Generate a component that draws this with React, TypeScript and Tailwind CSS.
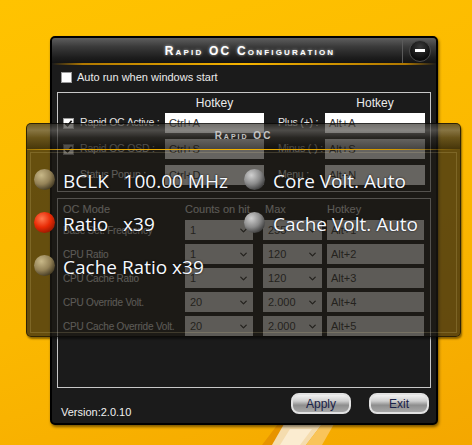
import { ChevronDown } from 'lucide-react';

const ui = { fontFamily: '"Liberation Sans", Arial, sans-serif' };
const big = { fontFamily: '"Open Sans", "Noto Sans", sans-serif' };

const hotRows = [
  { check: true, label: 'Rapid OC Active :', a: 'Ctrl+A', label2: 'Plus (+) :', b: 'Alt+A' },
  { check: true, label: 'Rapid OC OSD :', a: 'Ctrl+S', label2: 'Minus (-) :', b: 'Alt+S' },
  { check: false, label: 'Status Popup :', a: 'Ctrl+D', label2: 'Menu :', b: 'Alt+N' },
];

const modeRows = [
  { label: 'Base Set. Frequency', count: '1', max: '255', key: 'Alt+1' },
  { label: 'CPU Ratio', count: '1', max: '120', key: 'Alt+2' },
  { label: 'CPU Cache Ratio', count: '1', max: '120', key: 'Alt+3' },
  { label: 'CPU Override Volt.', count: '20', max: '2.000', key: 'Alt+4' },
  { label: 'CPU Cache Override Volt.', count: '20', max: '2.000', key: 'Alt+5' },
];

function Check({ checked }: { checked?: boolean }) {
  return (
    <span className="flex h-[11px] w-[11px] items-center justify-center border border-[#9a9a9a] bg-white">
      {checked && (
        <svg viewBox="0 0 10 10" className="h-[9px] w-[9px]">
          <path d="M1.5 5 L4 7.5 L8.5 2" fill="none" stroke="#111" strokeWidth="2" />
        </svg>
      )}
    </span>
  );
}

function Drop({ value, w }: { value: string; w: string }) {
  return (
    <div className={`flex h-[20px] ${w} items-center justify-between bg-[#e4e4e4] pl-[5px] pr-[4px] text-[11px] text-[#333]`}>
      <span>{value}</span>
      <ChevronDown size={11} strokeWidth={3} className="text-[#333]" />
    </div>
  );
}

function Ball({ tone }: { tone: 'tan' | 'red' | 'gray' }) {
  const cls =
    tone === 'red'
      ? 'bg-[radial-gradient(circle_at_38%_32%,#ff7a50,#e82a05_45%,#7a1200_90%)]'
      : tone === 'gray'
        ? 'bg-[radial-gradient(circle_at_35%_30%,#d0d0d0,#8a8a8a_45%,#1a1a1a_92%)]'
        : 'bg-[radial-gradient(circle_at_35%_30%,#c8b888,#948257_45%,#201a0c_92%)]';
  return <span className={`h-[21px] w-[21px] shrink-0 rounded-full ${cls}`} />;
}

function Reading({ tone, text }: { tone: 'tan' | 'red' | 'gray'; text: string }) {
  return (
    <div className="flex h-[22px] items-center">
      <Ball tone={tone} />
      <span
        className="ml-[8px] mt-[5px] whitespace-pre text-[19px] leading-none text-[#f6f9ff] [text-shadow:0_0_2px_rgba(0,0,0,0.9)]"
        style={big}
      >
        {text}
      </span>
    </div>
  );
}

export default function App() {
  return (
    <div className="relative h-[445px] w-[472px] overflow-hidden bg-[linear-gradient(160deg,#ffc300_0%,#fbb800_55%,#f4a700_100%)]" style={ui}>
      {/* wallpaper flower petal */}
      <svg className="absolute bottom-0 left-[250px] h-[22px] w-[100px]" viewBox="0 0 100 22">
        <polygon points="12,22 28,1 36,1 22,22" fill="#e79400" />
        <polygon points="22,22 34,1 72,1 56,22" fill="#f5dcae" />
        <polygon points="30,22 40,6 62,6 50,22" fill="#fbecd0" />
        <polygon points="56,22 72,1 84,1 72,22" fill="#f9c45a" />
      </svg>

      {/* main window */}
      <div className="absolute left-[50px] top-[36px] flex h-[389px] w-[388px] flex-col overflow-hidden rounded-[5px] border-2 border-black bg-[#1b1b1b] shadow-[1px_2px_3px_rgba(0,0,0,0.5)]">
        <div className="flex h-[25px] bg-[linear-gradient(180deg,#5e5e5e_0%,#3a3a3a_35%,#1c1c1c_80%,#141414_100%)]">
          <div className="flex flex-1 items-center justify-center pl-[46px]">
            <span className="text-[12px] font-bold tracking-[2.2px] text-white [font-variant:small-caps] [text-shadow:0_0_3px_rgba(255,255,255,0.7)]">
              Rapid OC Configuration
            </span>
          </div>
          <div className="w-px bg-[#5a5a5a]" />
          <div className="flex w-[33px] items-center justify-center">
            <span className="flex h-[22px] w-[22px] items-center justify-center rounded-full border border-[#4a4a4a] bg-[radial-gradient(circle_at_50%_30%,#3a3a3a,#0c0c0c_70%)]">
              <span className="h-[3px] w-[10px] bg-white" />
            </span>
          </div>
        </div>
        <div className="h-[2px] bg-[linear-gradient(90deg,transparent_0%,#b07800_8%,#f6b400_50%,#b07800_92%,transparent_100%)]" />

        <div className="flex flex-1 flex-col px-[5px]">
          <div className="mt-[6px] flex h-[12px] items-center pl-[4px]">
            <Check />
            <span className="ml-[5px] text-[11px] text-[#ececec]">Auto run when windows start</span>
          </div>

          <div className="mt-[9px] flex h-[100px] flex-col gap-[6px] border border-[#c8c8c8]">
            <div className="-mb-[6px] flex h-[20px] items-center text-[12px] text-[#ececec]">
              <div className="w-[107px]" />
              <div className="w-[99px] text-center">Hotkey</div>
              <div className="w-[61px]" />
              <div className="w-[100px] text-center">Hotkey</div>
            </div>
            {hotRows.map((r) => (
              <div key={r.label} className="flex h-[20px] items-center text-[10.5px] tracking-[-0.2px] text-[#e6e6e6]">
                <div className="w-[22px] pl-[5px]">{r.check && <Check checked />}</div>
                <div className="w-[85px] whitespace-nowrap">{r.label}</div>
                <div className="flex h-[20px] w-[99px] items-center bg-white px-[4px] text-[11px] tracking-normal text-[#333]">{r.a}</div>
                <div className="w-[14px]" />
                <div className="w-[47px] whitespace-nowrap">{r.label2}</div>
                <div className="flex h-[20px] w-[100px] items-center bg-white px-[4px] text-[11px] tracking-normal text-[#333]">{r.b}</div>
              </div>
            ))}
          </div>

          <div className="mt-[6px] flex h-[190px] flex-col gap-[4px] border border-[#c8c8c8]">
            <div className="-mb-[4px] flex h-[21px] items-center text-[11px] text-[#e0e0e0]">
              <div className="w-[127px] pl-[5px]">OC Mode</div>
              <div className="w-[78px] whitespace-nowrap">Counts on hit</div>
              <div className="w-[64px] pl-[2px]">Max</div>
              <div>Hotkey</div>
            </div>
            {modeRows.map((r) => (
              <div key={r.label} className="flex h-[20px] items-center text-[11px] text-[#e0e0e0]">
                <div className="w-[127px] overflow-hidden whitespace-nowrap pl-[5px] text-[10px] tracking-[-0.2px]">{r.label}</div>
                <Drop value={r.count} w="w-[68px]" />
                <div className="w-[10px]" />
                <Drop value={r.max} w="w-[59px]" />
                <div className="w-[5px]" />
                <div className="flex h-[20px] w-[97px] items-center bg-[#e4e4e4] px-[4px] text-[#333]">{r.key}</div>
              </div>
            ))}
          </div>

          <div className="flex flex-1 items-start">
            <span className="ml-[4px] mt-[16px] text-[11px] text-[#f0f0f0]">Version:2.0.10</span>
            <div className="ml-auto mr-[2px] mt-[5px] flex gap-[18px]">
              {['Apply', 'Exit'].map((b) => (
                <button
                  key={b}
                  className="flex h-[21px] w-[60px] items-center justify-center rounded-[8px] border-2 border-[#e2e2e2] bg-[linear-gradient(180deg,#f2f2f2_0%,#cfcfcf_35%,#8e8e8e_60%,#a8a8a8_100%)] text-[12px] text-[#1a2248]"
                >
                  {b}
                </button>
              ))}
            </div>
          </div>
        </div>
      </div>

      {/* Rapid OC overlay */}
      <div className="absolute left-[26px] top-[123px] flex h-[214px] w-[435px] flex-col overflow-hidden rounded-[5px] border border-[rgba(0,0,0,0.55)] bg-[rgba(30,27,20,0.68)] shadow-[1px_2px_2px_rgba(0,0,0,0.45)]">
        <div className="flex h-[25px] items-center justify-center bg-[linear-gradient(180deg,rgba(255,255,255,0.08)_0%,rgba(255,255,255,0.22)_25%,rgba(120,120,120,0.12)_55%,rgba(0,0,0,0.3)_100%)]">
          <span className="mb-[2px] text-[10px] font-bold tracking-[2px] text-[#c4c4c4] [font-variant:small-caps]">Rapid OC</span>
        </div>
        <div className="h-px bg-[linear-gradient(90deg,rgba(230,170,0,0.4)_0%,#e8a800_10%,#f0b000_50%,#d09600_85%,transparent_100%)]" />
        <div className="mx-[3px] mb-[3px] mt-[2px] flex flex-1 flex-col gap-[21px] border border-[rgba(255,235,170,0.16)] pl-[3px] pt-[15px]">
          <div className="grid grid-cols-[210px_1fr]">
            <Reading tone="tan" text="BCLK   100.00 MHz" />
            <Reading tone="gray" text="Core Volt. Auto" />
          </div>
          <div className="grid grid-cols-[210px_1fr]">
            <Reading tone="red" text="Ratio   x39" />
            <Reading tone="gray" text="Cache Volt. Auto" />
          </div>
          <div className="grid grid-cols-[210px_1fr]">
            <Reading tone="tan" text="Cache Ratio x39" />
          </div>
        </div>
      </div>
    </div>
  );
}
